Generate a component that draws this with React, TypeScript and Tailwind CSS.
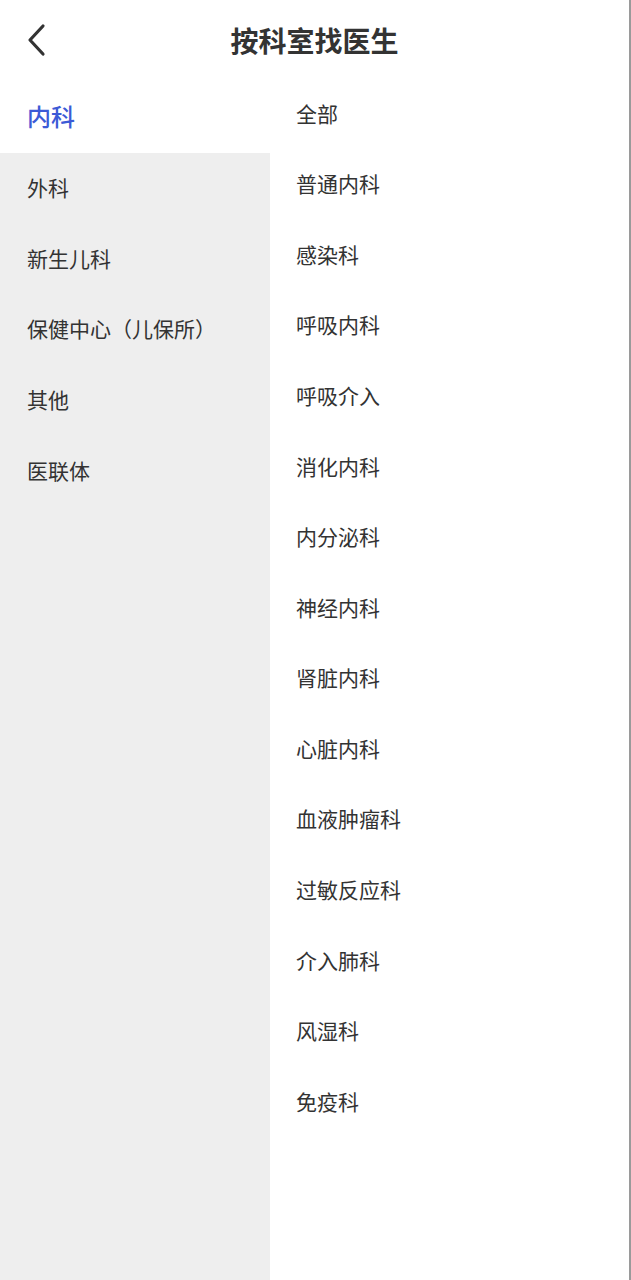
import React from 'react'

const leftItems = ['内科', '外科', '新生儿科', '保健中心（儿保所）', '其他', '医联体']
const rightItems = [
  '全部',
  '普通内科',
  '感染科',
  '呼吸内科',
  '呼吸介入',
  '消化内科',
  '内分泌科',
  '神经内科',
  '肾脏内科',
  '心脏内科',
  '血液肿瘤科',
  '过敏反应科',
  '介入肺科',
  '风湿科',
  '免疫科',
]

const font = { fontFamily: '"Noto Sans CJK SC", "Noto Sans", sans-serif' }

const App: React.FC = () => {
  const active = 0

  return (
    <div
      className="w-[631px] h-[1280px] bg-white flex flex-col overflow-hidden border-r-2 border-[#9a9a9a]"
      style={font}
    >
      {/* header */}
      <div className="h-[82px] flex items-center relative shrink-0">
        <button className="absolute left-[22px] top-[22px] w-[28px] h-[36px] flex items-center justify-center">
          <svg width="22" height="34" viewBox="0 0 22 34" fill="none">
            <path d="M18 3 L5 17 L18 31" stroke="#333" strokeWidth="3.2" strokeLinecap="round" strokeLinejoin="round" />
          </svg>
        </button>
        <h1 className="w-full text-center text-[28px] font-bold text-[#333] leading-none -mt-[3px]">按科室找医生</h1>
      </div>

      <div className="flex flex-1 min-h-0">
        {/* left column */}
        <div className="w-[270px] bg-[#eeeeee] flex flex-col">
          {leftItems.map((item, i) => (
            <div
              key={item}
              className={
                i === active
                  ? 'h-[70.6px] flex items-center pl-[27px] pb-[3px] bg-white text-[#3c5ad6] text-[24px] font-medium'
                  : 'h-[70.6px] flex items-center pl-[27px] text-[#333] text-[21px]'
              }
            >
              {item}
            </div>
          ))}
        </div>

        {/* right column */}
        <div className="flex-1 flex flex-col -mt-[4px]">
          {rightItems.map((item) => (
            <div key={item} className="h-[70.6px] shrink-0 flex items-center pl-[26px] text-[21px] text-[#333]">
              {item}
            </div>
          ))}
        </div>
      </div>
    </div>
  )
}

export default App
